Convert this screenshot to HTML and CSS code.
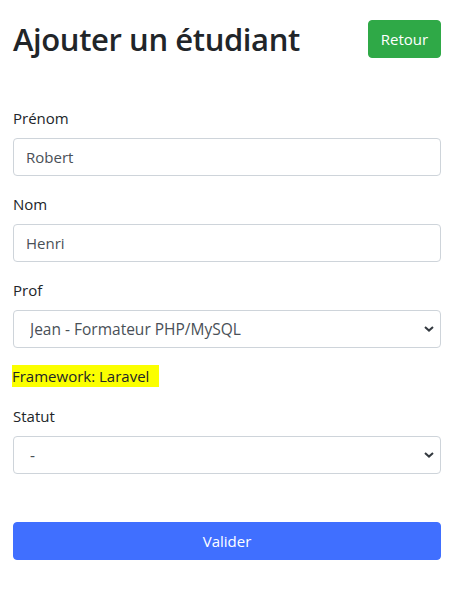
FILE: index.html
```html
<!DOCTYPE html>
<html lang="fr">
<head>
<meta charset="utf-8">
<title>Ajouter un étudiant</title>
<link rel="stylesheet" href="styles.css">
</head>
<body>
<div class="container">
  <div class="header">
    <h1 class="title">Ajouter un étudiant</h1>
    <a class="btn btn-success" href="#">Retour</a>
  </div>
  <form class="form">
    <div class="group">
      <label class="label" for="prenom">Prénom</label>
      <input class="control" id="prenom" type="text" value="Robert">
    </div>
    <div class="group">
      <label class="label" for="nom">Nom</label>
      <input class="control" id="nom" type="text" value="Henri">
    </div>
    <div class="group">
      <label class="label" for="prof">Prof</label>
      <select class="control select" id="prof">
        <option>Jean - Formateur PHP/MySQL</option>
      </select>
    </div>
    <p class="note"><span class="mark">Framework: Laravel</span></p>
    <div class="group">
      <label class="label" for="statut">Statut</label>
      <select class="control select" id="statut">
        <option>-</option>
      </select>
    </div>
    <button class="btn btn-primary btn-block" type="button">Valider</button>
  </form>
</div>
</body>
</html>
```

FILE: styles.css
```css
* { box-sizing: border-box; }
html, body { margin: 0; padding: 0; background: #fff; }
body {
  font-family: "Open Sans", "Noto Sans", Arial, sans-serif;
  font-size: 16px;
  line-height: 24px;
  color: #212529;
}
.container {
  padding: 20px 11px 0 13px;
}
.header {
  display: flex;
  justify-content: space-between;
  align-items: center;
  height: 38px;
}
.title {
  margin: 0;
  font-size: 31px;
  font-weight: 600;
  line-height: 38px;
  letter-spacing: -0.4px;
  color: #212529;
}
.btn {
  display: inline-flex;
  align-items: center;
  justify-content: center;
  height: 38px;
  padding: 0 12px;
  border: 1px solid transparent;
  border-radius: 4px;
  font: inherit;
  font-size: 15px;
  color: #fff;
  text-decoration: none;
  cursor: pointer;
}
.btn-success { background: #2fa947; border-color: #2fa947; width: 73px; }
.btn-primary { background: #406fff; border-color: #406fff; }
.btn-block { width: 100%; margin-top: 32px; }
.form { margin-top: 48px; }
.group { margin-bottom: 16px; }
.label {
  display: block;
  margin-bottom: 8px;
  font-size: 15px;
}
.control {
  display: block;
  width: 100%;
  height: 38px;
  padding: 0 12px;
  border: 1px solid #ced4da;
  border-radius: 4px;
  background: #fff;
  font: inherit;
  font-size: 15px;
  color: #495057;
  outline: none;
}
.select {
  appearance: none;
  -webkit-appearance: none;
  padding-left: 16px;
  font-size: 15.5px;
  background-image: url("data:image/svg+xml,%3Csvg xmlns='http://www.w3.org/2000/svg' width='10' height='6' viewBox='0 0 10 6'%3E%3Cpath d='M1 1l4 3.6L9 1' fill='none' stroke='%23343a40' stroke-width='2'/%3E%3C/svg%3E");
  background-repeat: no-repeat;
  background-position: right 6px center;
  background-size: 10px 6px;
}
.note {
  margin: 0 0 16px;
  font-size: 15px;
}
.mark {
  background: #fbff00;
  padding: 1px 10px 1px 0;
  margin-left: -1px;
}
```
